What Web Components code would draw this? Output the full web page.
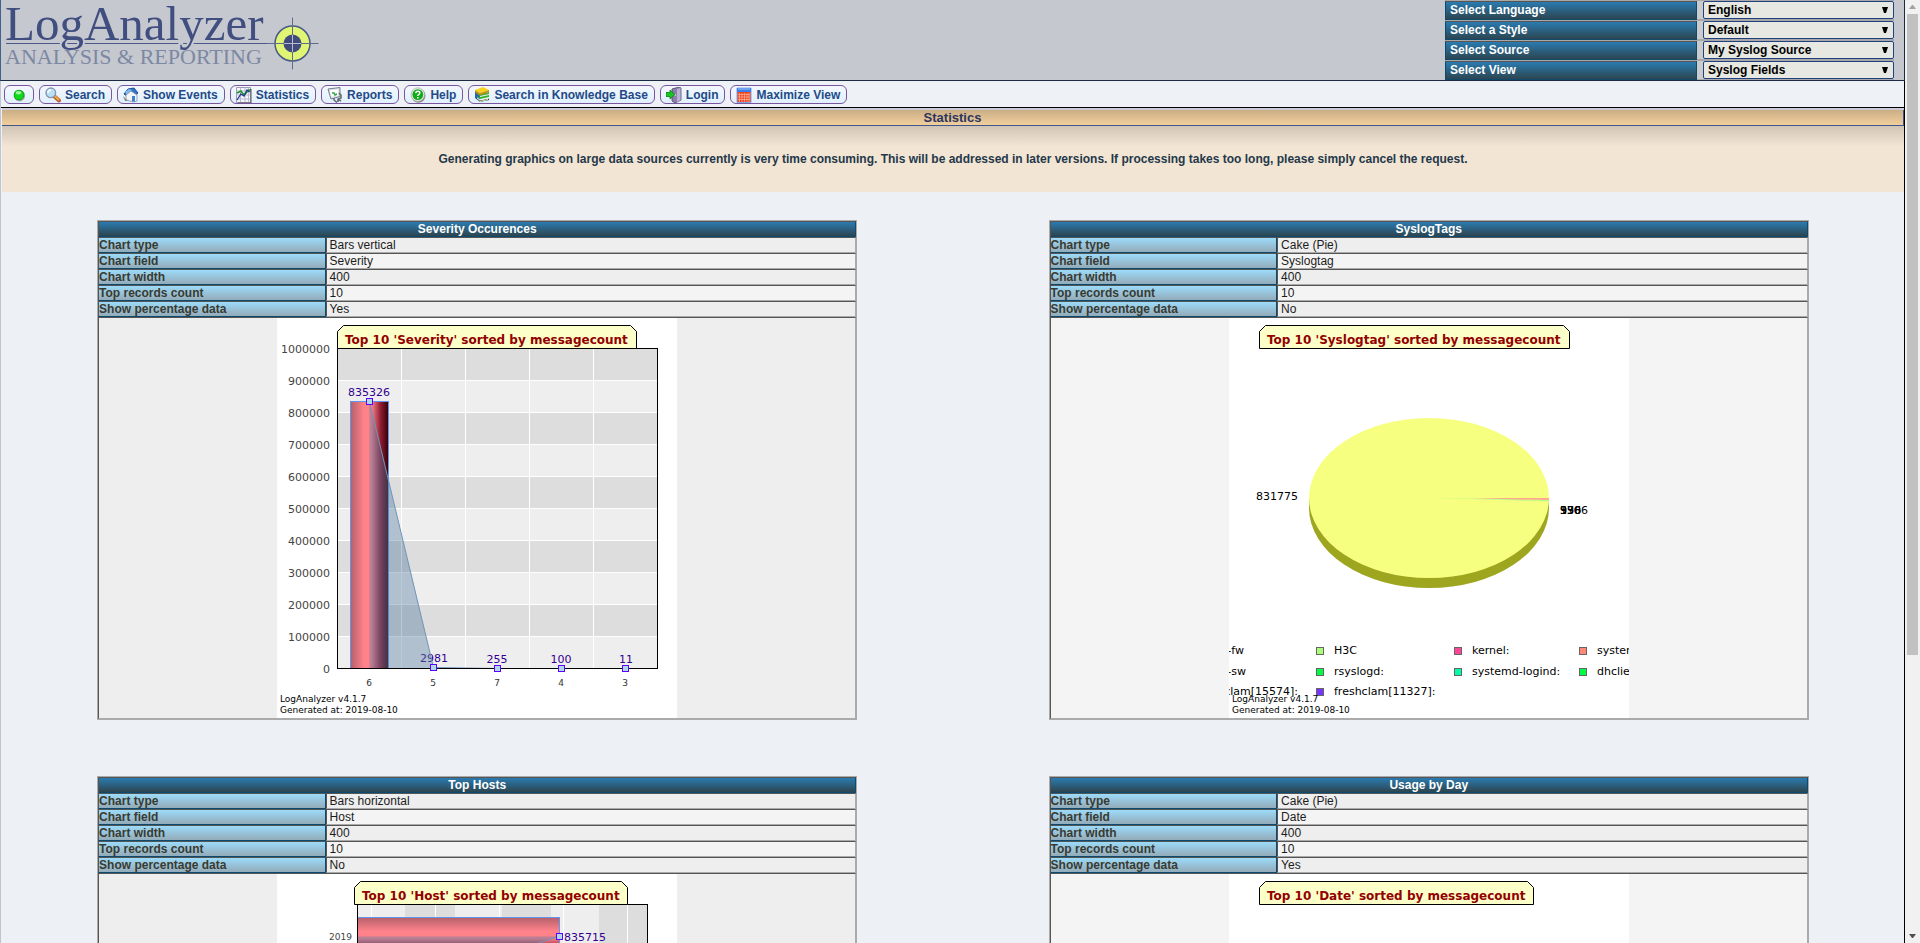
<!DOCTYPE html>
<html lang="en">
<head>
<meta charset="utf-8">
<title>LogAnalyzer :: Statistics</title>
<style>
html,body{margin:0;height:100%}
body{overflow:hidden;background:#edf1f6;font:12px/14px "Liberation Sans",Arial,sans-serif;color:#1c1c1c}
</style>
</head>
<body>
<log-app></log-app>

<script>
const define = (name, html, setup) => {
  const tpl = document.createElement('template');
  tpl.innerHTML = html;
  customElements.define(name, class extends HTMLElement {
    constructor() {
      super();
      this.attachShadow({mode: 'open'}).append(tpl.content.cloneNode(true));
    }
    connectedCallback() {
      if (setup && !this.ready) { this.ready = true; setup(this, this.shadowRoot); }
    }
  });
};

/* ---------- icons ---------- */
const ICONS = {
  dot: '<circle cx="8.5" cy="8.8" r="5.6" fill="#777" opacity=".6"/><circle cx="8" cy="8" r="5.3" fill="#0c9a14"/><circle cx="8" cy="8" r="4.6" fill="#12d81c"/><ellipse cx="7.5" cy="5.8" rx="2.8" ry="1.8" fill="#9df79d"/>',
  search: '<path d="M9 9l5 4.5" stroke="#b8603a" stroke-width="4" stroke-linecap="round"/><path d="M9.5 9l4 3.6" stroke="#f4a63c" stroke-width="2" stroke-linecap="round"/><circle cx="5.8" cy="5.8" r="4.8" fill="#b9e2f8" stroke="#8797ae" stroke-width="1.4"/><path d="M3 6a3 3 0 013-3" stroke="#fff" stroke-width="1.6" fill="none"/>',
  events: '<path d="M1 7l4-5 6-1 4 5-2 2-5-4-4 5z" fill="#2f74c9" stroke="#1d4d96"/><path d="M2 5l4-3 3 1-5 5z" fill="#83b8f0"/><path d="M3 8l5-4 6 4v6l-3 1-8-2z" fill="#f2f4f8" stroke="#8190aa" stroke-width=".8"/><path d="M9 9h3v5.500H9z" fill="#3f7fd2"/><path d="M0 9l5 5-3 0z" fill="#888"/>',
  stats: '<path d="M.5.5h14v15H.5z" fill="#f4f4fb" stroke="#999ab4"/><path d="M.5 4h14M.5 8h14M.5 12h14M4.500.5v15M9 .5v15M12.500.5v15" stroke="#b9b9cf"/><path d="M1 6l4-2 3 4 5-5h2" stroke="#1a9a2a" stroke-width="1.500" fill="none"/><path d="M1 13l4-6 3 2 3-6 3 2" stroke="#283a8c" stroke-width="1.300" fill="none"/><path d="M15 2v14H2" stroke="#555" fill="none"/>',
  reports: '<path d="M1 2l12-1.500v9L4 12z" fill="#dfe3ea" stroke="#747b8a"/><path d="M3 3.500l8-1v6l-7 1z" fill="#fff"/><path d="M5 6h2l1 2 2-1" stroke="#29a93a" stroke-width="1.500" fill="none"/><path d="M12 6l2 2v3l-3 1v3M7 11v2l3 2.500M11 12l3 2" stroke="#666b78" stroke-width="1.600" fill="none"/>',
  help: '<circle cx="8.500" cy="8.700" r="7" fill="#888"/><circle cx="7.800" cy="7.600" r="6.800" fill="#e7ece7" stroke="#9aa09a" stroke-width=".6"/><circle cx="7.800" cy="7.600" r="5.400" fill="#11a91a"/><path d="M5.800 6.300q0-2 2-2t2 1.700q0 1-1.200 1.600-.8.400-.8 1.300" stroke="#fff" stroke-width="1.400" fill="none"/><path d="M7 10h1.600v1.400H7z" fill="#fff"/>',
  books: '<path d="M1 4l5 4v7l-5-4z" fill="#2c5db5"/><path d="M2 11l4 4 9-2v-2l-9 2z" fill="#333"/><path d="M2 9l4 3 9-2V8l-9 2z" fill="#35b52c"/><path d="M3 12l3 2 8-2v1l-8 2z" fill="#cde8b6"/><path d="M1 6l5 3 9-2V5L6 7z" fill="#48a832"/><path d="M1 3l8-3 6 3-9 3z" fill="#f7d21e"/><path d="M1 3l5 3 9-3v2L6 8 1 5z" fill="#c9940b"/><path d="M3 11l3 2 9-2" stroke="#fff" fill="none"/>',
  login: '<path d="M6 2l7-2 2 1v12l-6 3-3-2z" fill="#8d7fae" stroke="#4b4560" stroke-width=".8"/><path d="M11 2l3.500-1v12L11 15z" fill="#bcb2d4"/><path d="M9 7v2" stroke="#fff"/><path d="M0 5.500h4V3l5 4.500L4 12V9.500H0z" fill="#18c524" stroke="#0b7c16" stroke-width=".8"/>',
  max: '<path d="M1 1h14v14.500H1z" fill="#f2421f" stroke="#7fa6dd"/><path d="M1 1h14v4H1z" fill="#3d7fe8"/><path d="M2 2h12" stroke="#9cc4ff"/><path d="M3.500 6v9M6 6v9M8.500 6v9M11 6v9M13 6v9M2 7.500h12M2 10h12M2 12.500h12" stroke="#ffb39b" stroke-width=".7"/>'
};

define('nav-button', `
<style>
:host{display:block}
a{display:flex;align-items:center;gap:4px;height:17px;padding:0 6px 0 5px;border:1px solid #7a559f;border-radius:6px;
  background:linear-gradient(#f4f8fe,#e0f0fe);color:#234a86;font-weight:bold;text-decoration:none;white-space:nowrap}
svg{width:16px;height:16px;flex:none}
:host([bare]) a{gap:0;padding:0 6px}
</style>
<a href="#"><svg viewBox="0 0 16 16" aria-hidden="true"></svg><slot></slot></a>`,
(el, root) => {
  root.querySelector('svg').innerHTML = ICONS[el.getAttribute('icon')];
  if (el.hasAttribute('bare')) root.querySelector('a').setAttribute('aria-label', 'Status');
});

define('brand-logo', `
<style>
:host{display:block}
svg{display:block;width:320px;height:80px}
text{font-family:"Liberation Serif","Times New Roman",serif}
</style>
<svg viewBox="0 0 320 80" role="img" aria-label="LogAnalyzer">
  <path d="M5 43.500h270" stroke="#4a5a86"/>
  <text x="4" y="40" font-size="49" fill="#414f80" stroke="#c6c8d0" stroke-width="4" paint-order="stroke">LogAnalyzer</text>
  <text x="4" y="64" font-size="22" fill="#7c88a3">ANALYSIS &amp; REPORTING</text>
  <circle cx="291.500" cy="43.500" r="17.500" fill="#dff573" stroke="#4a5a86" stroke-width="1.500"/>
  <circle cx="291.500" cy="43.500" r="9" fill="#414c7c"/>
  <path d="M266 43.500h51.500M291.500 17.500v52" stroke="#5e6c8e"/>
  <path d="M283 43.500h17M291.500 35v17" stroke="#b7bdcf"/>
</svg>`);

define('pref-select', `
<style>
:host{display:grid;grid-template-columns:252px 191px;justify-content:space-between;height:18px;border:solid #a8a8a8;border-width:1px 0;background:#cbcbcb}
label{box-sizing:border-box;padding:0 4px;border:1px solid #0d4b6e;border-top-color:#555;line-height:17px;background:linear-gradient(#2b7bb0,#2c4550);color:#fff;font-weight:bold}
span{position:relative;display:block}
select{display:block;box-sizing:border-box;width:100%;height:18px;margin:0;padding:0 4px;border:1px solid #204080;border-radius:2px;appearance:none;
  background:#e6e8e1;color:#000;font:bold 12px "Liberation Sans",Arial,sans-serif}
svg{position:absolute;right:6px;top:6px;width:6px;height:6px;pointer-events:none}
</style>
<label for="s"></label><span><select id="s"><option></option></select><svg viewBox="0 0 6 6"><path d="M0 0h6L4 6H2z"/></svg></span>`,
(el, root) => {
  root.querySelector('label').textContent = el.getAttribute('label');
  root.querySelector('option').textContent = el.getAttribute('value');
});

define('app-header', `
<style>
:host{display:flex;justify-content:space-between;height:80px;background:#c6c8d0;border-bottom:1px solid #1c2a42;border-left:1px solid #44628e;border-right:1px solid #1c2a42;margin-left:-1px;margin-right:-1px}
.prefs{width:449px;margin-right:10px}
</style>
<brand-logo></brand-logo>
<div class="prefs">
  <pref-select label="Select Language" value="English"></pref-select>
  <pref-select label="Select a Style" value="Default"></pref-select>
  <pref-select label="Select Source" value="My Syslog Source"></pref-select>
  <pref-select label="Select View" value="Syslog Fields"></pref-select>
</div>`);

define('app-menu', `
<style>
:host{display:flex;align-items:center;gap:5px;height:25px;margin-top:1px;padding-left:3px;background:#eef1f6;border-bottom:1px solid #000}
</style>
<nav-button icon="dot" bare></nav-button>
<nav-button icon="search">Search</nav-button>
<nav-button icon="events">Show Events</nav-button>
<nav-button icon="stats">Statistics</nav-button>
<nav-button icon="reports">Reports</nav-button>
<nav-button icon="help">Help</nav-button>
<nav-button icon="books">Search in Knowledge Base</nav-button>
<nav-button icon="login">Login</nav-button>
<nav-button icon="max">Maximize View</nav-button>`);

define('page-notice', `
<style>
:host{display:block;border-top:2px solid #c9ccd6;text-align:center;font-weight:bold;margin-left:1px}
h1{margin:0;height:15px;font-size:13px;line-height:15px;color:#2b3560;background:linear-gradient(#ccae85,#f0cf9e);border-bottom:1px solid #43568c;border-right:1px solid #43568c}
p{margin:0;padding:26px 0;color:#24384a;background:linear-gradient(#d0c4b5,#f2e5d4 20px)}
</style>
<h1>Statistics</h1>
<p><slot></slot></p>`);

/* ---------- charts ---------- */
const titleTab = (x1, x2, name) =>
  `<path d="M${x1} 30.500V13.500l6-6H${x2 - 6}l6 6V30.500z" fill="#fcffc8" stroke="#000"/>` +
  `<text x="${x1 + 7.5}" y="26" font-size="12" font-weight="bold" fill="#930000">Top 10 '${name}' sorted by messagecount</text>`;
const footer = `<g font-size="9"><text x="3" y="384">LogAnalyzer v4.1.7</text><text x="3" y="395">Generated at: 2019-08-10</text></g>`;
const marker = (x, y) => `<rect x="${x - 3}" y="${y - 3}" width="6" height="6" fill="#add8e6" stroke="#6000ff"/>`;
const stops = '<stop offset="0" stop-color="#b4606a"/><stop offset=".36" stop-color="#ff828b"/><stop offset=".55" stop-color="#ff828b"/><stop offset=".8" stop-color="#8c1c30"/><stop offset="1" stop-color="#300008"/>';

const CHARTS = {
  severity() {
    let s = `<defs><linearGradient id="bar">${stops}</linearGradient></defs>`;
    for (let i = 0; i < 10; i++) s += `<rect x="60" y="${30 + 32 * i}" width="320" height="32" fill="${i % 2 ? '#eee' : '#ddd'}"/>`;
    for (let i = 1; i < 10; i++) s += `<path d="M60 ${30.5 + 32 * i}h320" stroke="#fff"/>`;
    for (let i = 1; i < 5; i++) s += `<path d="M${60.5 + 64 * i} 30v320" stroke="#fff"/>`;
    for (let i = 0; i < 11; i++) s += `<text x="53" y="${35 + 32 * i}" text-anchor="end" font-size="11" fill="#444">${(10 - i) * 100000}</text>`;
    s += '<rect x="73.500" y="83.500" width="38" height="267" fill="url(#bar)" stroke="#6495ed"/>';
    s += '<g font-size="11" text-anchor="middle" fill="#330090">';
    [['835326', 92, 78], ['2981', 157, 344], ['255', 220, 345], ['100', 284, 345], ['11', 349, 345]]
      .forEach(([t, x, y]) => s += `<text x="${x}" y="${y}">${t}</text>`);
    s += '</g><path d="M92.500 83.500L156.500 349.500l64 1H92.500z" fill="#537ba0" fill-opacity=".4"/>';
    s += '<path d="M92.500 83.500L156.500 349.500l64 1" fill="none" stroke="#7094b8"/>';
    s += '<rect x="60.500" y="30.500" width="320" height="320" fill="none" stroke="#000"/>';
    [[92.5, 83.5], [156.5, 349.5], [220.5, 350.5], [284.5, 350.5], [348.5, 350.5]].forEach(p => s += marker(...p));
    s += '<g font-size="9" text-anchor="middle" fill="#333">';
    ['6', '5', '7', '4', '3'].forEach((t, i) => s += `<text x="${92 + 64 * i}" y="368">${t}</text>`);
    return s + '</g>' + titleTab(60.5, 359.5, 'Severity') + footer;
  },
  tags() {
    let s = titleTab(30.5, 340.5, 'Syslogtag');
    s += '<path d="M80 180v10a120 80 0 00240 0v-10z" fill="#9ea51f"/><ellipse cx="200" cy="180" rx="120" ry="80" fill="#f7ff80"/>';
    s += '<path d="M200 180l120 3.500v-2z" fill="#c0ff86"/><path d="M241 180h79v2l-32-.5z" fill="#ffa88e"/>';
    s += '<g font-size="11"><text x="27" y="182">831775</text>';
    ['1306', '936', '556', '376', '990'].forEach(t => s += `<text x="331" y="196">${t}</text>`);
    [[87, 329, '#aaff77'], [225, 329, '#ff4499'], [350, 329, '#ff8877'], [87, 350, '#00ff44'], [225, 350, '#00ffa6'], [350, 350, '#00ff44'], [87, 370, '#7733ff']]
      .forEach(([x, y, c]) => s += `<rect x="${x + .5}" y="${y + .5}" width="7" height="7" fill="${c}" stroke="#666"/>`);
    [[105, 336, 'H3C'], [243, 336, 'kernel:'], [368, 336, 'systemd:'], [105, 357, 'rsyslogd:'], [243, 357, 'systemd-logind:'], [368, 357, 'dhclient:'], [105, 377, 'freshclam[11327]:']]
      .forEach(([x, y, t]) => s += `<text x="${x}" y="${y}">${t}</text>`);
    [[15, 336, '-fw'], [17, 357, '-sw'], [69, 377, 'clam[15574]:']]
      .forEach(([x, y, t]) => s += `<text x="${x}" y="${y}" text-anchor="end">${t}</text>`);
    return s + '</g>' + footer;
  },
  hosts() {
    let s = `<defs><linearGradient id="bar" x2="0" y2="1">${stops}</linearGradient></defs><rect x="80" y="30" width="290" height="320" fill="#eee"/>`;
    [[128, 50], [225, 49], [322, 48]].forEach(([x, w]) => s += `<rect x="${x}" y="30" width="${w}" height="320" fill="#ddd"/>`);
    for (let i = 0; i < 5; i++) s += `<path d="M${94.5 + 64 * i} 30v320" stroke="#fff"/>`;
    s += '<rect x="80.500" y="43.500" width="202" height="38" fill="url(#bar)" stroke="#6495ed"/>';
    s += '<path d="M80.500 62.500h202L80.500 126.500z" fill="#537ba0" fill-opacity=".4"/><path d="M282.500 62.500L80.500 126.500" stroke="#7094b8"/>';
    s += '<rect x="80.500" y="30.500" width="290" height="320" fill="none" stroke="#000"/>' + marker(282.5, 62.5);
    s += '<text x="75" y="66" font-size="9" text-anchor="end" fill="#444">2019</text><text x="287" y="67" font-size="11" fill="#330090">835715</text>';
    return s + titleTab(77.5, 350.5, 'Host') + footer;
  },
  days() {
    return titleTab(30.5, 304.5, 'Date') + footer;
  }
};

define('stat-chart', `
<style>
:host{display:block;width:400px;margin:0 auto;background:#fff}
svg{display:block;width:400px;height:400px;overflow:hidden}
text{font-family:"DejaVu Sans",sans-serif}
</style>
<svg viewBox="0 0 400 400"></svg>`,
(el, root) => { root.querySelector('svg').innerHTML = CHARTS[el.getAttribute('kind')](); });

define('stat-panel', `
<style>
:host{display:block;width:80%}
table{width:100%;table-layout:fixed;border-collapse:separate;border-spacing:0;border:1px solid #aaa}
th,td{padding:0;border:1px solid #aaa;border-top-color:#555;border-left-color:#555;line-height:14px;height:14px;text-align:left}
thead th{text-align:center;color:#fff;background:linear-gradient(#2b7bb0,#2c4550);border-bottom-color:#0d4b6e;border-right-color:#0d4b6e}
tbody th{width:30%;box-sizing:border-box;color:#3a3a30;background:linear-gradient(#9cdbf9,#93abb9);border-bottom-color:#0d4b6e;border-right-color:#0d4b6e}
tbody td{padding-left:3px;background:#eee}
tbody tr:nth-child(even) td{background:#f4f4f4}
tfoot td{background:#eee}
:host([light]) tfoot td{background:#f4f4f4}
</style>
<table>
<colgroup><col style="width:30%"><col></colgroup>
<thead><tr><th colspan="2"></th></tr></thead>
<tbody></tbody>
<tfoot><tr><td colspan="2"><slot></slot></td></tr></tfoot>
</table>`,
(el, root) => {
  root.querySelector('thead th').textContent = el.getAttribute('heading');
  const names = ['Chart type', 'Chart field', 'Chart width', 'Top records count', 'Show percentage data'];
  const values = [el.getAttribute('type'), el.getAttribute('field'), '400', '10', el.getAttribute('percent')];
  root.querySelector('tbody').innerHTML = names.map((n, i) => `<tr><th scope="row">${n}</th><td>${values[i]}</td></tr>`).join('');
});

define('side-scroll', `
<style>
:host{display:flex;flex-direction:column;align-items:center;background:#f1f1f1;padding:5px 0}
svg{display:block;width:7px;height:4px;flex:none}
.track{flex:1;width:11px;margin:5px 0}
.thumb{height:70%;background:#c1c1c1}
</style>
<svg viewBox="0 0 7 4"><path d="M0 4h7L4 0H3z" fill="#a3a3a3"/></svg>
<div class="track"><div class="thumb"></div></div>
<svg viewBox="0 0 7 4"><path d="M0 0h7L4 4H3z" fill="#505050"/></svg>`);

define('log-app', `
<style>
:host{display:grid;grid-template-columns:minmax(0,1fr) 15px;grid-template-rows:minmax(0,1fr);height:100vh;overflow:hidden}
main{border-left:1px solid #c0c4d0;border-right:1px solid #000}
.panels{display:grid;grid-template-columns:1fr 1fr;justify-items:center;gap:56px 1px;padding:28px 0 28px 1px}
</style>
<main>
  <app-header></app-header>
  <app-menu></app-menu>
  <page-notice>Generating graphics on large data sources currently is very time consuming. This will be addressed in later versions. If processing takes too long, please simply cancel the request.</page-notice>
  <div class="panels">
    <stat-panel heading="Severity Occurences" type="Bars vertical" field="Severity" percent="Yes"><stat-chart kind="severity"></stat-chart></stat-panel>
    <stat-panel heading="SyslogTags" type="Cake (Pie)" field="Syslogtag" percent="No" light><stat-chart kind="tags"></stat-chart></stat-panel>
    <stat-panel heading="Top Hosts" type="Bars horizontal" field="Host" percent="No"><stat-chart kind="hosts"></stat-chart></stat-panel>
    <stat-panel heading="Usage by Day" type="Cake (Pie)" field="Date" percent="Yes" light><stat-chart kind="days"></stat-chart></stat-panel>
  </div>
</main>
<side-scroll></side-scroll>`);
</script>
</body>
</html>
